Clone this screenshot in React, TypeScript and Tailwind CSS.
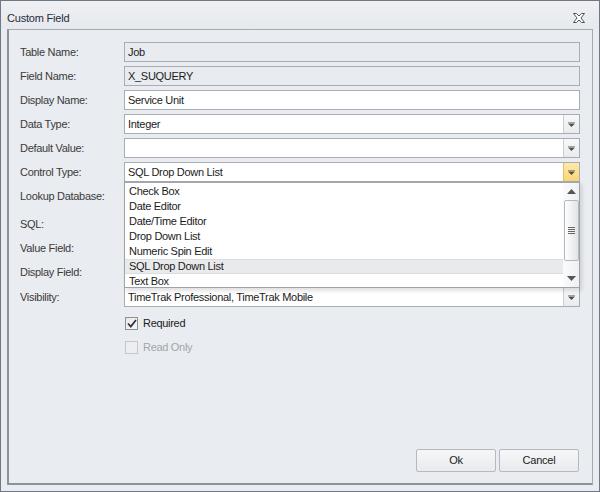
import React from "react";

const font = { fontFamily: '"Liberation Sans", Arial, sans-serif' };

function Arrow({ color = "#4d4d4d" }: { color?: string }) {
  return (
    <svg width="7" height="5" viewBox="0 0 7 5">
      <rect x="0" y="0" width="7" height="1" fill={color} opacity="0.5" />
      <path d="M0 1.5 H7 L3.5 5 Z" fill={color} />
    </svg>
  );
}

function TextBox({ value, disabled }: { value?: string; disabled?: boolean }) {
  return (
    <div
      className={`flex-1 h-[20px] border border-[#a9adb3] flex items-center pl-[3px] text-[11px] tracking-[-0.3px] text-[#1b1b1b] ${
        disabled ? "bg-[#e8ebef]" : "bg-white"
      }`}
    >
      {value}
    </div>
  );
}

function Combo({ value, active }: { value?: string; active?: boolean }) {
  return (
    <div className="flex-1 h-[20px] border border-[#a9adb3] bg-white flex items-stretch">
      <div className="flex-1 flex items-center pl-[3px] text-[11px] tracking-[-0.3px] text-[#1b1b1b] whitespace-nowrap overflow-hidden">
        {value}
      </div>
      {active ? (
        <div className="w-[16px] bg-gradient-to-b from-[#fdeaa8] to-[#f8d677] border-l border-[#e2bf5e] flex items-center justify-center">
          <Arrow />
        </div>
      ) : (
        <div className="w-[16px] bg-gradient-to-b from-[#f7f8f9] to-[#e9ebee] border-l border-[#c9ccd0] flex items-center justify-center">
          <Arrow />
        </div>
      )}
    </div>
  );
}

function Row({
  label,
  children,
  className = "",
}: {
  label: string;
  children?: React.ReactNode;
  className?: string;
}) {
  return (
    <div className={`flex items-center h-[20px] ${className}`}>
      <div className="w-[104px] text-[11px] tracking-[-0.3px] text-[#3a3a3a]">{label}</div>
      {children}
    </div>
  );
}

const items = [
  "Check Box",
  "Date Editor",
  "Date/Time Editor",
  "Drop Down List",
  "Numeric Spin Edit",
  "SQL Drop Down List",
  "Text Box",
];

function DropList() {
  return (
    <div className="absolute left-0 right-0 top-[19px] h-[107px] border border-[#9fa3a8] border-t-2 border-t-[#a3a7ac] bg-white flex z-10 shadow-[2px_3px_4px_rgba(0,0,0,0.12)]">
      <div className="flex-1 flex flex-col pt-[1px]">
        {items.map((it) => (
          <div
            key={it}
            className={`h-[15px] flex items-center pl-[4px] text-[11px] tracking-[-0.3px] text-[#1b1b1b] ${
              it === "SQL Drop Down List"
                ? "bg-[#e9eaeb] border-y border-[#dcdddf]"
                : ""
            }`}
          >
            {it}
          </div>
        ))}
      </div>
      <div className="w-[16px] bg-gradient-to-r from-[#fbfbfc] to-[#eef0f2] flex flex-col items-center">
        <div className="h-[17px] flex items-center justify-center">
          <svg width="9" height="5" viewBox="0 0 9 5">
            <path d="M0 5 L4.5 0 L9 5 Z" fill="#555" />
          </svg>
        </div>
        <div className="w-[15px] h-[61px] rounded-[2px] border border-[#b4b8bd] bg-gradient-to-r from-[#ffffff] to-[#e2e4e7] flex flex-col items-center justify-center gap-[1px]">
          <div className="w-[7px] h-[1px] bg-[#666]" />
          <div className="w-[7px] h-[1px] bg-[#666]" />
          <div className="w-[7px] h-[1px] bg-[#666]" />
          <div className="w-[7px] h-[1px] bg-[#666]" />
        </div>
        <div className="flex-1" />
        <div className="h-[17px] flex items-center justify-center">
          <svg width="9" height="5" viewBox="0 0 9 5">
            <path d="M0 0 L9 0 L4.5 5 Z" fill="#555" />
          </svg>
        </div>
      </div>
    </div>
  );
}

function Check({ checked, disabled }: { checked?: boolean; disabled?: boolean }) {
  return (
    <div
      className={`w-[13px] h-[13px] border flex items-center justify-center ${
        disabled ? "border-[#c4c7cb] bg-[#eceef1]" : "border-[#8d9197] bg-gradient-to-br from-[#e6e8eb] to-[#f7f8f9]"
      }`}
    >
      {checked && (
        <svg width="10" height="9" viewBox="0 0 10 9">
          <path d="M1 4.5 L3.8 7.5 L9 1" fill="none" stroke="#333" strokeWidth="1.8" />
        </svg>
      )}
    </div>
  );
}

function Button({ label }: { label: string }) {
  return (
    <div className="w-[80px] h-[23px] rounded-[2px] border border-[#b5b9be] bg-gradient-to-b from-[#f6f7f8] to-[#e8eaed] flex items-center justify-center text-[11px] tracking-[-0.2px] text-[#1b1b1b]">
      {label}
    </div>
  );
}

export default function App() {
  return (
    <div
      className="w-[600px] h-[492px] border border-[#6f7884] bg-[#e9ecf0] flex flex-col"
      style={font}
    >
      <div className="h-[28px] flex items-center justify-between pl-[6px] pr-[14px] bg-gradient-to-b from-[#eef0f3] to-[#e6e9ed]">
        <span className="text-[11px] tracking-[-0.2px] text-[#1f2b3a] pt-[6px]">Custom Field</span>
        <svg width="12" height="10" viewBox="0 0 12 10" className="mt-[6px]">
          <path
            d="M0.5 0.5 H3.5 L6 3 L8.5 0.5 H11.5 L8 5 L11.5 9.5 H8.5 L6 7 L3.5 9.5 H0.5 L4 5 Z"
            fill="#fff"
            stroke="#4e5258"
            strokeWidth="1"
          />
        </svg>
      </div>
      <div className="flex-1 mx-[6px] mb-[6px] border border-[#a4aab0] border-l-2 border-b-2 border-l-[#8c9299] border-b-[#8c9299] flex flex-col pl-[11px] pr-[12px] pt-[12px] pb-[11px]">
        <div className="flex flex-col gap-[4px]">
          <Row label="Table Name:">
            <TextBox value="Job" disabled />
          </Row>
          <Row label="Field Name:">
            <TextBox value="X_SUQUERY" disabled />
          </Row>
          <Row label="Display Name:">
            <TextBox value="Service Unit" />
          </Row>
          <Row label="Data Type:">
            <Combo value="Integer" />
          </Row>
          <Row label="Default Value:">
            <Combo value="" />
          </Row>
          <Row label="Control Type:">
            <div className="flex-1 flex relative h-[20px]">
              <Combo value="SQL Drop Down List" active />
              <DropList />
            </div>
          </Row>
          <Row label="Lookup Database:">
            <div className="flex-1" />
          </Row>
          <Row label="SQL:" className="mt-[4px]">
            <div className="flex-1" />
          </Row>
          <Row label="Value Field:">
            <div className="flex-1" />
          </Row>
          <Row label="Display Field:">
            <div className="flex-1" />
          </Row>
          <Row label="Visibility:" className="mt-[1px]">
            <Combo value="TimeTrak Professional, TimeTrak Mobile" />
          </Row>
        </div>
        <div className="flex flex-col gap-[4px] mt-[6px] pl-[105px]">
          <div className="h-[20px] flex items-center gap-[5px]">
            <Check checked />
            <span className="text-[11px] tracking-[-0.3px] text-[#1b1b1b]">Required</span>
          </div>
          <div className="h-[20px] flex items-center gap-[5px]">
            <Check disabled />
            <span className="text-[11px] tracking-[-0.3px] text-[#a3a6aa]">Read Only</span>
          </div>
        </div>
        <div className="mt-auto flex justify-end gap-[3px] mr-[1px]">
          <Button label="Ok" />
          <Button label="Cancel" />
        </div>
      </div>
    </div>
  );
}
